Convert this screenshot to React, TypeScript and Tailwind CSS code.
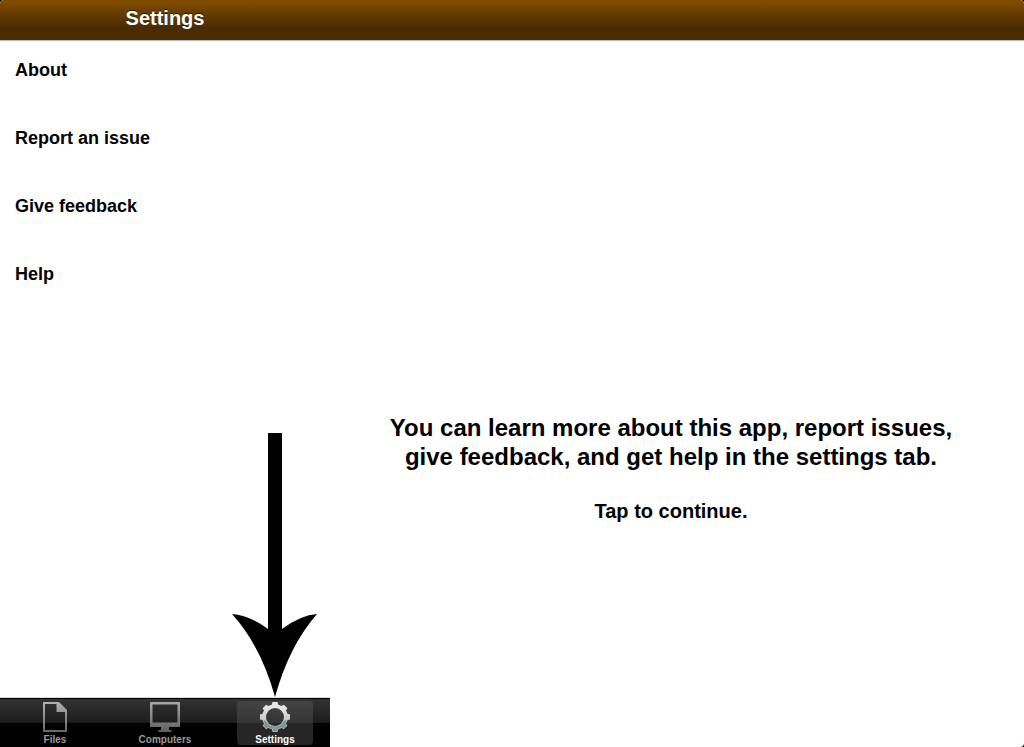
const settings = ['About', 'Report an issue', 'Give feedback', 'Help'];

const teeth = [0, 45, 90, 135, 180, 225, 270, 315];

function FileIcon() {
  return (
    <svg viewBox="0 0 32 32" className="h-8 w-8 shrink-0" aria-hidden="true">
      <defs>
        <linearGradient id="file-shade" x1="0" y1="0" x2="0" y2="1">
          <stop offset="0" stopColor="#b2b2b2" />
          <stop offset="1" stopColor="#666666" />
        </linearGradient>
      </defs>
      <path
        fillRule="evenodd"
        fill="url(#file-shade)"
        d="M4 1H20L28 9V31H4ZM6 3V29H26V11H17.500V3Z"
      />
    </svg>
  );
}

function ComputerIcon() {
  return (
    <svg viewBox="0 0 32 32" className="h-8 w-8 shrink-0" aria-hidden="true">
      <defs>
        <linearGradient id="computer-shade" x1="0" y1="0" x2="0" y2="1">
          <stop offset="0" stopColor="#aaaaaa" />
          <stop offset="1" stopColor="#606060" />
        </linearGradient>
      </defs>
      <path
        fillRule="evenodd"
        fill="url(#computer-shade)"
        d="M2 1H30Q31 1 31 2V25Q31 26 30 26H20V29H22.500V31H9.500V29H12V26H2Q1 26 1 25V2Q1 1 2 1ZM3.500 3.500V21.500H28.500V3.500Z"
      />
    </svg>
  );
}

function GearIcon() {
  return (
    <svg viewBox="0 0 32 32" className="h-8 w-8 shrink-0" aria-hidden="true">
      <defs>
        <linearGradient id="gear-shade" x1="0" y1="0" x2="0" y2="1">
          <stop offset="0.05" stopColor="#eeeeee" />
          <stop offset="0.6" stopColor="#c8c8c8" />
          <stop offset="0.62" stopColor="#8b8f8f" />
          <stop offset="1" stopColor="#8b8f8f" />
        </linearGradient>
        <linearGradient id="gear-rim" x1="0" y1="0" x2="0" y2="1">
          <stop offset="0.4" stopColor="#e4e4e4" />
          <stop offset="0.7" stopColor="#9dbbbb" />
        </linearGradient>
        <mask id="gear-outline">
          <circle cx="16" cy="16" r="12.800" fill="white" />
          {teeth.map((angle) => (
            <path key={angle} d="M12.500 5L13.500 1H18.500L19.500 5Z" fill="white" transform={`rotate(${angle} 16 16)`} />
          ))}
          <circle cx="16" cy="16" r="9" fill="black" />
        </mask>
        <mask id="gear-body">
          <circle cx="16" cy="16" r="12.100" fill="white" />
          {teeth.map((angle) => (
            <path key={angle} d="M13.200 6L14.200 1.700H17.800L18.800 6Z" fill="white" transform={`rotate(${angle} 16 16)`} />
          ))}
          <circle cx="16" cy="16" r="9.800" fill="black" />
        </mask>
      </defs>
      <rect width="32" height="32" fill="url(#gear-rim)" mask="url(#gear-outline)" />
      <rect width="32" height="32" fill="url(#gear-shade)" mask="url(#gear-body)" />
    </svg>
  );
}

const tabs = [
  { label: 'Files', Icon: FileIcon, active: false },
  { label: 'Computers', Icon: ComputerIcon, active: false },
  { label: 'Settings', Icon: GearIcon, active: true },
];

export default function App() {
  return (
    <div className="bg-black font-['Liberation_Sans',Arial,sans-serif] font-bold text-black">
      <div className="flex min-h-screen flex-col overflow-hidden rounded-t rounded-br bg-white">
        <header className="h-10 bg-linear-to-b from-[#804c00] from-5% via-[#492b00] via-70% to-[#492b00] shadow-[0_1px_1px_#bbb]">
          <h1 className="w-[330px] pt-1 text-center text-xl leading-7 text-white [text-shadow:0_-1px_0_#2b1900]">
            Settings
          </h1>
        </header>
        <div className="flex grow">
          <aside className="flex w-[330px] shrink-0 flex-col">
            <ul className="grow pt-4">
              {settings.map((item) => (
                <li key={item} className="h-17">
                  <button className="w-full px-[15px] text-left text-lg">{item}</button>
                </li>
              ))}
            </ul>
            <svg viewBox="0 0 86 264" className="mr-3 mb-px h-[264px] w-[86px] self-end" aria-hidden="true">
              <path d="M36 0H50V196Q69 182 85 181Q57 213 43 264Q29 213 0 181Q17 182 36 196Z" />
            </svg>
            <nav className="grid grid-cols-3 border-t border-black bg-linear-to-b from-[#333] via-[#1c1c1c] via-50% to-black to-50% shadow-[0_-1px_0_#ddd]">
              {tabs.map(({ label, Icon, active }) => (
                <a
                  key={label}
                  href={`#${label.toLowerCase()}`}
                  aria-current={active ? 'page' : undefined}
                  className="flex justify-center py-0.5 text-[#999] aria-[current]:text-white"
                >
                  <span
                    className={
                      active
                        ? 'flex h-11 w-[76px] flex-col items-center rounded-sm bg-linear-to-b from-[#444] via-[#353535] via-50% to-[#262626] to-50%'
                        : 'flex h-11 w-[76px] flex-col items-center'
                    }
                  >
                    <Icon />
                    <span className="text-[10px] leading-[14px]">{label}</span>
                  </span>
                </a>
              ))}
            </nav>
          </aside>
          <main className="flex grow flex-col">
            <button className="flex grow flex-col items-center justify-center pt-[150px] pr-3 text-center">
              <span className="max-w-[600px] text-2xl leading-[29px]">
                You can learn more about this app, report issues, give feedback, and get help in the settings tab.
              </span>
              <span className="mt-[26px] text-xl leading-7">Tap to continue.</span>
            </button>
          </main>
        </div>
      </div>
    </div>
  );
}
